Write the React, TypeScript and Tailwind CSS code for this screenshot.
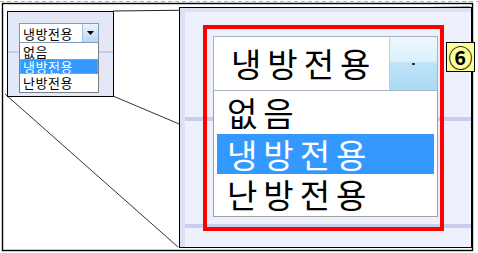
const KR = "font-['Noto_Sans_CJK_KR','Noto_Sans_CJK_SC',sans-serif]";

function SmallPanel() {
  return (
    <div className="mt-[4px] w-[107px] h-[86px] border border-black bg-[#e4e7f6] bg-[linear-gradient(to_bottom,transparent_39px,#c6cced_39px,#c6cced_41px,transparent_41px)] pl-[11px] pt-[11px]">
      <div className="flex w-[80px] h-[20px] border border-[#7f9db9] bg-white">
        <div className="flex-1 flex items-center pl-[3px] text-[13px] leading-none tracking-[0.5px] text-black">냉방전용</div>
        <div className="w-[16px] flex items-center justify-center border-l border-[#a5c0dc] bg-[linear-gradient(to_bottom,#eaf4fc,#b8d8f2)]">
          <svg width="7" height="4" viewBox="0 0 7 4">
            <path d="M0 0h7L3.5 4z" fill="#000" />
          </svg>
        </div>
      </div>
      <div className="w-[80px] h-[50px] border border-[#7f7f7f] border-t-0 bg-white text-[13px] leading-none tracking-[0.5px]">
        <div className="h-[16px] flex items-center pl-[3px] text-black">없음</div>
        <div className="h-[15px] flex items-center pl-[3px] bg-[#3399ff] text-white outline-1 outline-dotted outline-[#f0a030] -outline-offset-1">냉방전용</div>
        <div className="h-[17px] flex items-center pl-[3px] text-black">난방전용</div>
      </div>
    </div>
  );
}

function BigPanel() {
  return (
    <div className="relative ml-[65px] w-[293px] h-[241px] border border-black bg-[#eef0fb] bg-[linear-gradient(to_bottom,transparent_109px,#c9ceee_109px,#c9ceee_113px,transparent_113px,transparent_216px,#c9ceee_216px,#c9ceee_220px,transparent_220px)]">
      <div className="h-full border-l-[5px] border-t-[4px] border-[#dde1f4] pl-[18px] pt-[13px]">
        <div className="w-[241px] h-[206px] border-4 border-[#ff0000] pl-[6px] pt-[7px]">
          <div className="flex w-[225px] h-[55px] border border-[#a7b4c7] bg-white">
            <div className="flex-1 flex items-center pl-[17px] text-[33px] leading-none text-black tracking-[6px]">냉방전용</div>
            <div className="w-[48px] flex items-center justify-center border-l border-[#b5d3ea] bg-[linear-gradient(to_bottom,#eef7fd_0%,#dcf0fb_45%,#bfe3f7_50%,#a9d9f4_100%)]">
              <div className="w-[3px] h-[2px] bg-[#333]" />
            </div>
          </div>
          <div className="w-[225px] h-[126px] border border-[#a0a0a0] border-t-0 bg-white px-[3px] text-[33px] leading-none">
            <div className="h-[43px] flex items-center pl-[10px] tracking-[6px] text-black">없음</div>
            <div className="h-[40px] flex items-center pl-[10px] tracking-[6px] bg-[#3399ff] text-white">냉방전용</div>
            <div className="h-[40px] flex items-center pl-[10px] tracking-[6px] text-black">난방전용</div>
          </div>
        </div>
      </div>
      <div className="absolute left-[266px] top-[34px] w-[29px] h-[30px] border border-black bg-[#ffff99] flex items-center justify-center text-[24px] font-bold leading-none text-black">
        ⑥
      </div>
    </div>
  );
}

export default function App() {
  return (
    <div className={`relative w-[478px] h-[253px] bg-white overflow-hidden ${KR}`}>
      <svg className="absolute inset-0" width="478" height="253">
        <line x1="0" y1="1.5" x2="478" y2="1.5" stroke="#b0b0b0" strokeDasharray="4 3" />
        <rect x="2.5" y="3.5" width="470" height="247" fill="none" stroke="#000" strokeWidth="1.4" />
        <line x1="113" y1="11" x2="470" y2="7" stroke="#222" strokeWidth="1.2" />
        <line x1="5" y1="94" x2="178" y2="247" stroke="#333" strokeWidth="1" />
        <line x1="113" y1="96" x2="470" y2="247" stroke="#333" strokeWidth="1" />
      </svg>
      <div className="relative flex items-start pl-[7px] pt-[7px]">
        <SmallPanel />
        <BigPanel />
      </div>
    </div>
  );
}
